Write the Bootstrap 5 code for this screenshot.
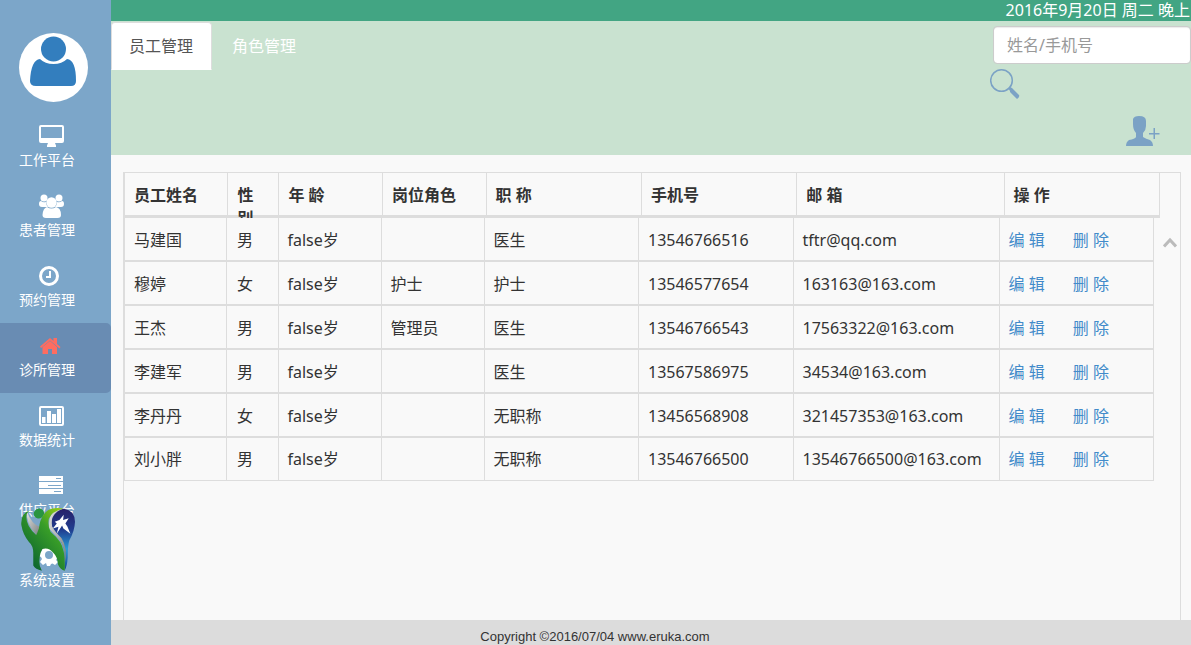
<!DOCTYPE html>
<html lang="zh-CN">
<head>
<meta charset="utf-8">
<meta name="viewport" content="width=device-width, initial-scale=1">
<title>员工管理</title>
<link href="https://cdn.jsdelivr.net/npm/bootstrap@5.3.0/dist/css/bootstrap.min.css" rel="stylesheet">
<style>
  body { font-family: "Noto Sans", "Noto Sans CJK SC", sans-serif; font-size: 16px; line-height: 22px; color: #333; background: #f9f9f9; }
  .sidebar { width: 111px; background: #7ca6c9; padding-top: 33px; }
  .avatar { width: 69px; height: 69px; margin: 0 0 11px 19px; }
  .side-link { height: 70px; padding: 10px 0 0 19px; color: #fff; font-size: 14px; line-height: 20px; border-radius: 0 5px 5px 0; }
  .side-link:hover { color: #fff; }
  .side-link.active { background: #698cb3; }
  .side-link .glyph { display: block; width: 26px; height: 26px; margin: 0 0 1px 20px; fill: currentColor; }
  .side-link.active .glyph { color: #ff6c60; }
  .brand-logo { left: 21px; top: -27px; width: 55px; height: 66px; }
  .datebar { height: 21px; background: #42a583; color: #fff; line-height: 20px; padding-right: 1px; }
  .toolbar { height: 134px; background: #c9e2d0; }
  .toolbar .nav-tabs { border: 0; padding-top: 1px; gap: 2px; }
  .toolbar .nav-link { margin: 0; padding: 12px 17px; border: 1px solid transparent; border-radius: 4px 4px 0 0; color: #fff; }
  .toolbar .nav-link.active { color: #555; background: #fff; border-color: #ddd #ddd #fff; padding-right: 18px; }
  .finder { width: 201px; padding-top: 5px; }
  .finder .form-control { height: 38px; margin-left: 3px; width: 198px; border: 1px solid #ccc; border-radius: 4px; padding: 6px 13px; box-shadow: inset 0 1px 1px rgba(0,0,0,.08); }
  .finder .form-control::placeholder { color: #999; }
  .icon-btn { border: 0; background: none; padding: 0; color: #7ba2c5; line-height: 0; }
  .add-btn { margin: 15px 31px 0 0; }
  .sheet { margin: 17px 10px 0 12px; border: 1px solid #ddd; border-bottom: 0; }
  .head-clip { height: 45px; margin-right: 20px; overflow: hidden; box-shadow: inset 0 -3px 0 #ddd; }
  .staff { --bs-table-bg: transparent; --bs-table-color: #333; table-layout: fixed; border-collapse: separate; border-spacing: 0; margin: 0; color: #333; }
  .staff th, .staff td { padding: 0 9px; border: 0 solid #ddd; border-right-width: 1px; }
  .staff tr > :first-child { border-left-width: 1px; }
  .staff tr > :nth-child(2) { padding-left: 10px; padding-right: 10px; }
  .staff th { padding-top: 11px; vertical-align: top; line-height: 23px; }
  .staff td { height: 44px; padding-top: 2px; vertical-align: middle; border-bottom-width: 2px; white-space: nowrap; }
  .staff tr:last-child td { height: 43px; padding-top: 0; border-bottom-width: 1px; }
  .staff a { color: #428bca; text-decoration: none; margin-right: 24px; }
  .to-top { width: 26px; padding: 19px 0 0 6px; color: #bbb; }
  .copy { height: 25px; background: #dcdcdc; font: 13px/15px "Liberation Sans", Arial, sans-serif; padding: 9px 112px 0 0; }
</style>
</head>
<body>
<div class="d-flex min-vh-100">
  <aside class="sidebar flex-shrink-0">
    <svg class="avatar d-block" viewBox="0 0 69 69" aria-label="用户头像"><circle cx="34.500" cy="34.500" r="34.500" fill="#fff"/><circle cx="34.500" cy="16" r="12.500" fill="#337ebe"/><path d="M21 26Q26 31 34.500 31T48 26Q57 27 57 48Q57 53 52 53H17Q11 53 11 48Q12 27 21 26Z" fill="#337ebe"/></svg>
    <nav class="nav flex-column flex-nowrap">
      <a class="side-link d-block text-decoration-none" href="#"><svg class="glyph" viewBox="0 0 26 26"><path fill-rule="evenodd" d="M2 2H23Q25 2 25 4V18Q25 20 23 20H16L17 22.500V24H8V22.500L9 20H2Q0 20 0 18V4Q0 2 2 2ZM2 4V15H23V4Z"/></svg>工作平台</a>
      <a class="side-link d-block text-decoration-none" href="#"><svg class="glyph" viewBox="0 0 26 26"><circle cx="5" cy="5" r="3.500"/><circle cx="20" cy="5" r="3.500"/><path d="M2 8Q4 10 7 9Q7 12 9 14H3Q0 14 0 11Q0 8 2 8ZM23 8Q21 10 18 9Q18 12 16 14H22Q25 14 25 11Q25 8 23 8Z"/><circle cx="12.500" cy="9.500" r="5.200"/><path d="M8 14Q12.500 17 17 14Q22 15 22 22Q22 25 18.500 25H7Q3.500 25 3.500 22Q4 15 8 14Z"/></svg>患者管理</a>
      <a class="side-link d-block text-decoration-none" href="#"><svg class="glyph" viewBox="0 0 26 26"><circle cx="10" cy="13" r="8.500" fill="none" stroke="currentColor" stroke-width="3"/><path d="M10 8H12V15H7V13H10Z"/></svg>预约管理</a>
      <a class="side-link active d-block text-decoration-none" href="#" aria-current="page"><svg class="glyph" viewBox="0 0 26 26"><path d="M1 13.500L11 5L14.500 8V5H18V11L21.500 14L20.500 15.500L11 7.500L2 15Z"/><path d="M11 8L18 14V21H13V16H9V21H3.500V14Z"/></svg>诊所管理</a>
      <a class="side-link d-block text-decoration-none" href="#"><svg class="glyph" viewBox="0 0 26 26"><path fill-rule="evenodd" d="M2 3H23Q25 3 25 5V21Q25 23 23 23H2Q0 23 0 21V5Q0 3 2 3ZM2 5V21H23V5Z"/><path d="M3 14H6.500V20H3ZM8 8H12V20H8ZM13 11H17V20H13ZM18 6H22V20H18Z"/></svg>数据统计</a>
      <a class="side-link d-block text-decoration-none" href="#"><svg class="glyph" viewBox="0 0 26 26"><path fill-rule="evenodd" d="M0 3H24V8H0ZM17 5V6H22V5ZM0 9H24V15H0ZM9 12V13H22V12ZM0 16H24V21H0ZM15 18V19H22V18Z"/></svg>供应平台</a>
      <a class="side-link d-block text-decoration-none position-relative" href="#"><svg class="glyph" viewBox="0 0 26 26"><path fill-rule="evenodd" d="M8 1H12L12.500 4L15 5L17 3L20 6L18 8.500L19 10.500L21 11V15L18 15.500L17 17L19 19L16 22L13.500 20.500L12 21L11 23H8L7 20L4 22L1 19L3 16L2 14L0 13V10L2 9L3 7L1 5L4 3L6.500 4ZM10 8A4 4 0 1 0 10 16A4 4 0 1 0 10 8Z"/></svg>系统设置
        <svg class="brand-logo position-absolute" viewBox="62 124 166 196" aria-hidden="true">
          <defs>
            <linearGradient id="leaf" x1="1" y1="0" x2="0.200" y2="1"><stop offset="0" stop-color="#a8d512"/><stop offset="0.400" stop-color="#389d28"/><stop offset="1" stop-color="#075e30"/></linearGradient>
            <linearGradient id="drop" x1="0" y1="0" x2="0" y2="1"><stop offset="0" stop-color="#281f68"/><stop offset="0.350" stop-color="#203f91"/><stop offset="0.650" stop-color="#299dd8"/><stop offset="1" stop-color="#173e91"/></linearGradient>
            <linearGradient id="steel" x1="0" y1="0" x2="1" y2="1"><stop offset="0" stop-color="#e2e2df"/><stop offset="1" stop-color="#777d80"/></linearGradient>
          </defs>
          <path d="M80 139Q76 175 109 211L120 186Q94 178 80 139Z" fill="url(#steel)"/>
          <path d="M154 163Q160 132 192 131Q224 136 225 170Q224 198 208 226Q203 241 203 278Q201 306 194 317Q196 274 187 239Q179 220 165 205Q151 188 154 163Z" fill="url(#drop)"/>
          <path d="M190 131Q142 132 147 190Q168 211 184 232Q196 255 194 300Q204 248 184 219Q164 199 156 184Q148 145 190 131Z" fill="url(#steel)"/>
          <ellipse cx="116" cy="145" rx="15" ry="16" fill="#299441" transform="rotate(55 116 145)"/>
          <path d="M90 135Q60 144 63 180Q68 210 86 231Q100 243 99 268V302Q105 313 125 318Q115 302 118 282Q119 263 127 252Q145 246 160 264Q172 275 174 300Q181 315 194 318Q197 258 180 231Q168 214 151 200Q142 183 146 161Q154 139 190 130Q147 122 130 149Q119 164 116 190Q112 201 108 210Q78 184 78 155Q78 142 90 135Z" fill="url(#leaf)"/>
          <path d="M158 190L170 175L164 170L178 165L191 149L189 165L206 159L196 175L202 184L211 206L190 190L186 181L170 206L175 185Z" fill="#fff"/>
        </svg>
      </a>
    </nav>
  </aside>
  <div class="d-flex flex-column flex-grow-1">
    <div class="datebar text-end">2016年9月20日 周二 晚上</div>
    <header class="toolbar d-flex justify-content-between">
      <ul class="nav nav-tabs align-self-start">
        <li class="nav-item"><a class="nav-link active" href="#" aria-current="page">员工管理</a></li>
        <li class="nav-item"><a class="nav-link" href="#">角色管理</a></li>
      </ul>
      <form class="finder d-flex flex-column" role="search">
        <input class="form-control" type="text" placeholder="姓名/手机号" aria-label="姓名/手机号">
        <button class="icon-btn align-self-start mt-1" type="submit" aria-label="搜索"><svg width="31" height="32" viewBox="0 0 31 32"><circle cx="11.500" cy="12.500" r="10.800" fill="none" stroke="currentColor" stroke-width="1.500"/><path d="M18 20L20 19L22 20L29 27Q30 29 27 31L20 24V23Z" fill="currentColor"/></svg></button>
        <button class="icon-btn align-self-end add-btn" type="button" aria-label="添加员工"><svg width="34" height="32" viewBox="0 0 34 32" fill="currentColor"><path d="M7 4Q8 1 13 1Q20 1 20 6V11Q20 15 17 18V22Q20 24 24 25Q27 27 27 31H0Q0 27 3 25Q9 24 10 22V18Q7 15 7 9Z"/><path d="M27.500 13H29V18H33.500V19.500H29V24H27.500V19.500H23V18H27.500Z"/></svg></button>
      </form>
    </header>
    <main class="sheet flex-grow-1">
      <div class="head-clip">
        <table class="table staff">
          <colgroup><col style="width:10%"><col style="width:5%"><col style="width:10%"><col style="width:10%"><col style="width:15%"><col style="width:15%"><col style="width:20%"><col style="width:15%"></colgroup>
          <thead><tr><th scope="col">员工姓名</th><th scope="col">性别</th><th scope="col">年 龄</th><th scope="col">岗位角色</th><th scope="col">职 称</th><th scope="col">手机号</th><th scope="col">邮 箱</th><th scope="col">操 作</th></tr></thead>
        </table>
      </div>
      <div class="d-flex align-items-start">
        <table class="table staff" aria-label="员工列表">
          <colgroup><col style="width:10%"><col style="width:5%"><col style="width:10%"><col style="width:10%"><col style="width:15%"><col style="width:15%"><col style="width:20%"><col style="width:15%"></colgroup>
          <tbody>
            <tr><td>马建国</td><td>男</td><td>false岁</td><td></td><td>医生</td><td>13546766516</td><td>tftr@qq.com</td><td><a href="#">编 辑</a> <a href="#">删 除</a></td></tr>
            <tr><td>穆婷</td><td>女</td><td>false岁</td><td>护士</td><td>护士</td><td>13546577654</td><td>163163@163.com</td><td><a href="#">编 辑</a> <a href="#">删 除</a></td></tr>
            <tr><td>王杰</td><td>男</td><td>false岁</td><td>管理员</td><td>医生</td><td>13546766543</td><td>17563322@163.com</td><td><a href="#">编 辑</a> <a href="#">删 除</a></td></tr>
            <tr><td>李建军</td><td>男</td><td>false岁</td><td></td><td>医生</td><td>13567586975</td><td>34534@163.com</td><td><a href="#">编 辑</a> <a href="#">删 除</a></td></tr>
            <tr><td>李丹丹</td><td>女</td><td>false岁</td><td></td><td>无职称</td><td>13456568908</td><td>321457353@163.com</td><td><a href="#">编 辑</a> <a href="#">删 除</a></td></tr>
            <tr><td>刘小胖</td><td>男</td><td>false岁</td><td></td><td>无职称</td><td>13546766500</td><td>13546766500@163.com</td><td><a href="#">编 辑</a> <a href="#">删 除</a></td></tr>
          </tbody>
        </table>
        <button class="icon-btn to-top flex-shrink-0" type="button" aria-label="向上滚动"><svg width="14" height="11" viewBox="0 0 14 11"><path d="M1 9.500L7 3L13 9.500" fill="none" stroke="currentColor" stroke-width="3"/></svg></button>
      </div>
    </main>
    <footer class="copy text-center">Copyright ©2016/07/04 www.eruka.com</footer>
  </div>
</div>
<script src="https://cdn.jsdelivr.net/npm/bootstrap@5.3.0/dist/js/bootstrap.bundle.min.js"></script>
</body>
</html>
